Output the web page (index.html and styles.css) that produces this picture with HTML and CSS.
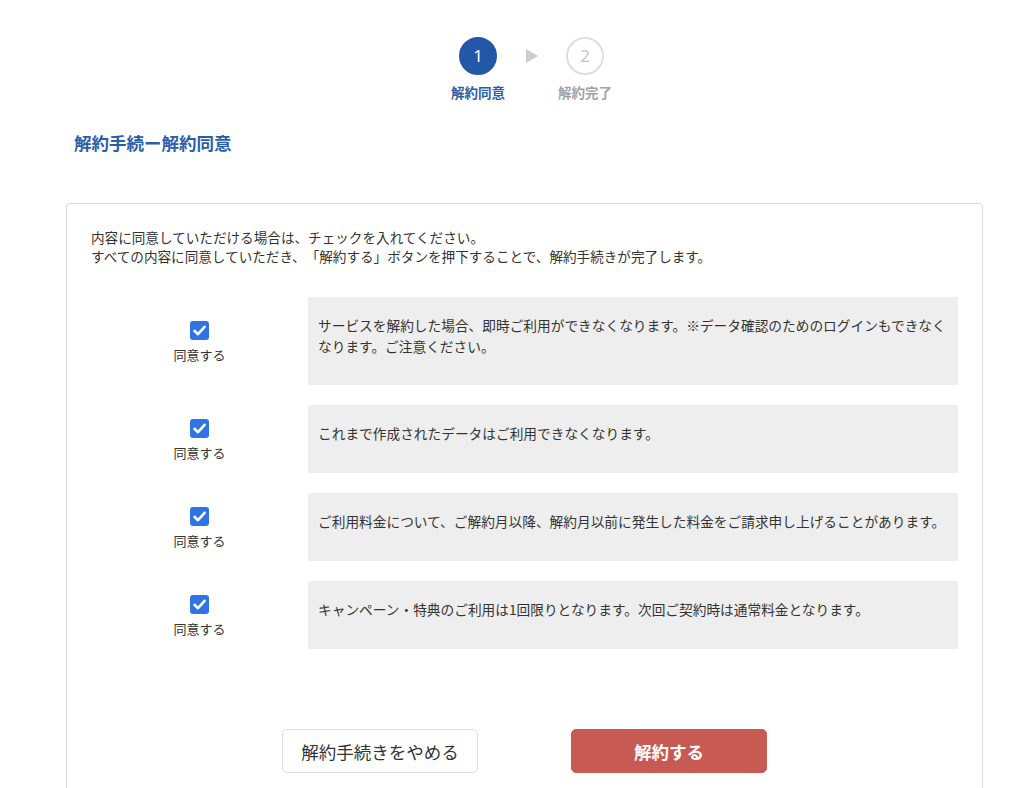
FILE: index.html
```html
<!DOCTYPE html>
<html lang="ja">
<head>
<meta charset="utf-8">
<title>解約手続ー解約同意</title>
<link rel="stylesheet" href="styles.css">
</head>
<body>
<div class="page">
  <div class="steps">
    <div class="step active">
      <div class="circle">1</div>
      <div class="step-label">解約同意</div>
    </div>
    <div class="arrow"></div>
    <div class="step">
      <div class="circle">2</div>
      <div class="step-label">解約完了</div>
    </div>
  </div>

  <h1 class="title">解約手続ー解約同意</h1>

  <div class="card">
    <p class="intro">内容に同意していただける場合は、チェックを入れてください。<br>すべての内容に同意していただき、「解約する」ボタンを押下することで、解約手続きが完了します。</p>

    <div class="rows">
      <div class="row">
        <label class="agree">
          <span class="check"><svg viewBox="0 0 19 19" width="19" height="19"><path d="M4.5 9.8 L8 13.2 L14.6 5.8" fill="none" stroke="#fff" stroke-width="2.6" stroke-linecap="round" stroke-linejoin="round"/></svg></span>
          <span class="agree-text">同意する</span>
        </label>
        <div class="box box-tall">サービスを解約した場合、即時ご利用ができなくなります。※データ確認のためのログインもできなくなります。ご注意ください。</div>
      </div>
      <div class="row">
        <label class="agree">
          <span class="check"><svg viewBox="0 0 19 19" width="19" height="19"><path d="M4.5 9.8 L8 13.2 L14.6 5.8" fill="none" stroke="#fff" stroke-width="2.6" stroke-linecap="round" stroke-linejoin="round"/></svg></span>
          <span class="agree-text">同意する</span>
        </label>
        <div class="box">これまで作成されたデータはご利用できなくなります。</div>
      </div>
      <div class="row">
        <label class="agree">
          <span class="check"><svg viewBox="0 0 19 19" width="19" height="19"><path d="M4.5 9.8 L8 13.2 L14.6 5.8" fill="none" stroke="#fff" stroke-width="2.6" stroke-linecap="round" stroke-linejoin="round"/></svg></span>
          <span class="agree-text">同意する</span>
        </label>
        <div class="box">ご利用料金について、ご解約月以降、解約月以前に発生した料金をご請求申し上げることがあります。</div>
      </div>
      <div class="row">
        <label class="agree">
          <span class="check"><svg viewBox="0 0 19 19" width="19" height="19"><path d="M4.5 9.8 L8 13.2 L14.6 5.8" fill="none" stroke="#fff" stroke-width="2.6" stroke-linecap="round" stroke-linejoin="round"/></svg></span>
          <span class="agree-text">同意する</span>
        </label>
        <div class="box">キャンペーン・特典のご利用は1回限りとなります。次回ご契約時は通常料金となります。</div>
      </div>
    </div>

    <div class="buttons">
      <button class="btn btn-cancel">解約手続きをやめる</button>
      <button class="btn btn-submit">解約する</button>
    </div>
  </div>
</div>
</body>
</html>
```

FILE: styles.css
```css
* { box-sizing: border-box; }
html, body {
  margin: 0;
  padding: 0;
  background: #fff;
}
body {
  font-family: "Noto Sans CJK JP", "Noto Sans", sans-serif;
  color: #333;
  text-spacing-trim: space-all;
}
.page {
  width: 917px;
  margin-left: 66px;
  padding-top: 37px;
}
.steps {
  display: flex;
  justify-content: center;
  align-items: flex-start;
  padding-left: 14px;
}
.step {
  width: 60px;
  display: flex;
  flex-direction: column;
  align-items: center;
}
.circle {
  width: 38px;
  height: 38px;
  border-radius: 50%;
  border: 2px solid #dedede;
  color: #c4c4c4;
  font-family: "Noto Sans", sans-serif;
  font-size: 17px;
  line-height: 34px;
  text-align: center;
  background: #fff;
}
.step.active .circle {
  background: #2358a6;
  border-color: #2358a6;
  color: #fff;
}
.step-label {
  margin-top: 9px;
  font-size: 13.5px;
  line-height: 16px;
  font-weight: bold;
  color: #a3a3a3;
  white-space: nowrap;
}
.step.active .step-label { color: #2a5ea8; }
.arrow {
  width: 0;
  height: 0;
  margin: 12px 17px 0 18px;
  border-top: 7px solid transparent;
  border-bottom: 7px solid transparent;
  border-left: 12px solid #c8ccd3;
}
.title {
  margin: 31px 0 0 8px;
  font-size: 17.5px;
  line-height: 24px;
  font-weight: bold;
  color: #2a5ea8;
}
.card {
  margin-top: 48px;
  border: 1px solid #dcdcdc;
  border-radius: 4px;
  padding: 24px 24px 40px;
}
.intro {
  margin: 0;
  font-size: 13.6px;
  line-height: 19px;
  color: #333;
}
.rows {
  margin-top: 31px;
  display: flex;
  flex-direction: column;
  gap: 20px;
}
.row {
  display: flex;
  align-items: center;
}
.agree {
  width: 217px;
  flex: none;
  display: flex;
  flex-direction: column;
  align-items: center;
  padding-top: 4px;
}
.check {
  width: 19px;
  height: 19px;
  border-radius: 3px;
  background: #2f74e6;
  display: block;
}
.check svg { display: block; }
.agree-text {
  margin-top: 5px;
  font-size: 13px;
  line-height: 20px;
  color: #333;
}
.box {
  flex: 1;
  background: #eeeeee;
  padding: 18px 5px 28px 10px;
  font-size: 13.7px;
  line-height: 21px;
  min-height: 68px;
  color: #333;
}
.box-tall { min-height: 88px; }
.buttons {
  margin-top: 80px;
  display: flex;
  justify-content: center;
  gap: 93px;
}
.btn {
  width: 196px;
  height: 44px;
  border-radius: 5px;
  font-family: "Noto Sans CJK JP", "Noto Sans", sans-serif;
  font-size: 17.5px;
  cursor: pointer;
}
.btn-cancel {
  background: #fff;
  border: 1px solid #dddddd;
  color: #333;
}
.btn-submit {
  background: #c85a54;
  border: 1px solid #c85a54;
  color: #fff;
  font-weight: bold;
}
```
